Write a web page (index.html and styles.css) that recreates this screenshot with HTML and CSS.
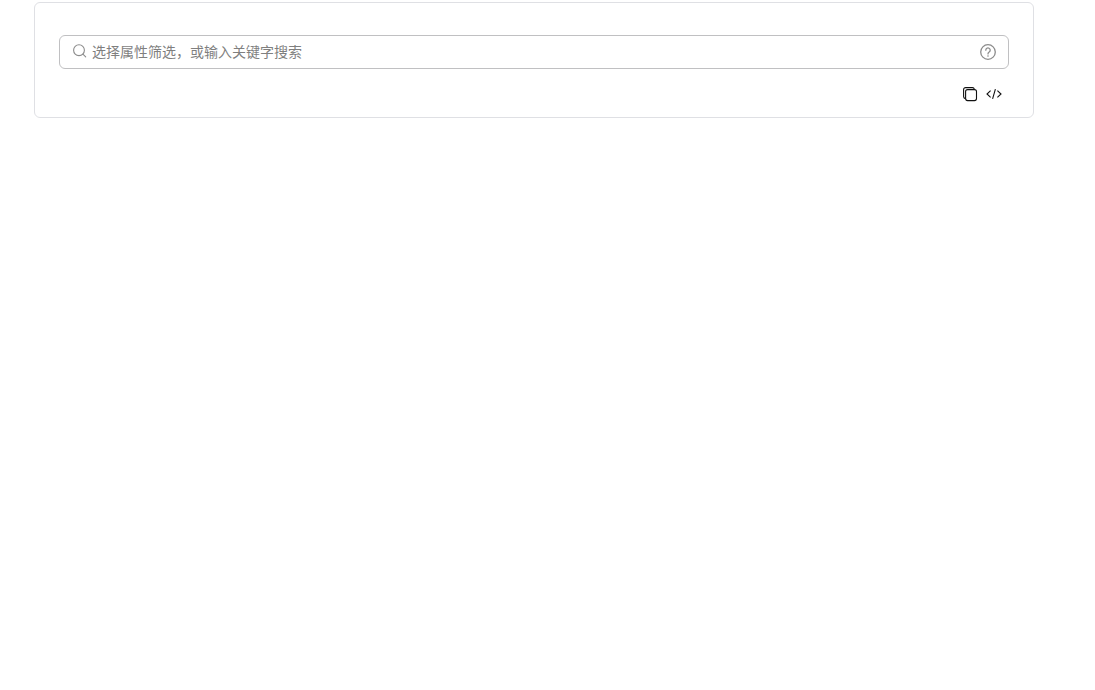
FILE: index.html
```html
<!DOCTYPE html>
<html lang="zh">
<head>
<meta charset="utf-8">
<title>搜索</title>
<link rel="stylesheet" href="styles.css">
</head>
<body>
<div class="card">
  <div class="search">
    <svg class="search-icon" width="16" height="16" viewBox="0 0 16 16" fill="none" stroke="#8c8c8c" stroke-width="1.1"><circle cx="7" cy="7.2" r="5.4"/><path d="M10.9 11.1l2.8 2.8" stroke-linecap="round"/></svg>
    <span class="placeholder">选择属性筛选，或输入关键字搜索</span>
    <svg class="help-icon" width="16" height="16" viewBox="0 0 16 16" fill="none" stroke="#8c8c8c" stroke-width="1.3"><circle cx="8" cy="8" r="7.3"/><path d="M5.8 6.2a2.2 2.2 0 1 1 3.4 1.8c-.8.5-1.2 1-1.2 1.9" stroke-linecap="round"/><circle cx="8" cy="12" r=".8" fill="#8c8c8c" stroke="none"/></svg>
  </div>
  <div class="actions">
    <svg class="copy" width="16" height="16" viewBox="0 0 16 16" fill="none" stroke="#111" stroke-width="1.1"><rect x="3.6" y="3.6" width="10.9" height="11" rx="2"/><path d="M3.3 12.6A2 2 0 0 1 1.6 10.6V3.6a2 2 0 0 1 2-2h6.8a2 2 0 0 1 1.9 1.6"/></svg>
    <svg class="code" width="16" height="16" viewBox="0 0 16 16" fill="none" stroke="#111" stroke-width="1.1"><path d="M4.6 4.6L1 8l3.6 3.4M11.4 4.6L15 8l-3.6 3.4M9.4 3.2L6.6 12.8"/></svg>
  </div>
</div>
</body>
</html>
```

FILE: styles.css
```css
* { box-sizing: border-box; }
html, body { margin: 0; background: #fff; }
body { padding: 2px 0 0 34px; font-family: "Liberation Sans", "Noto Sans CJK SC", sans-serif; }
.card {
  width: 1000px;
  height: 116px;
  border: 1px solid #dfe0e4;
  border-radius: 6px;
  padding: 32px 24px 0;
}
.search {
  display: flex;
  align-items: center;
  height: 34px;
  border: 1px solid #c0c0c2;
  border-radius: 6px;
  padding: 0 12px;
}
.search-icon { flex: none; margin-top: -2px; }
.placeholder {
  flex: 1;
  margin-left: 4px;
  font-size: 14px;
  line-height: 20px;
  color: #7f7f7f;
}
.help-icon { flex: none; }
.actions {
  display: flex;
  justify-content: flex-end;
  gap: 8px;
  margin-top: 17px;
  padding-right: 7px;
}
```
